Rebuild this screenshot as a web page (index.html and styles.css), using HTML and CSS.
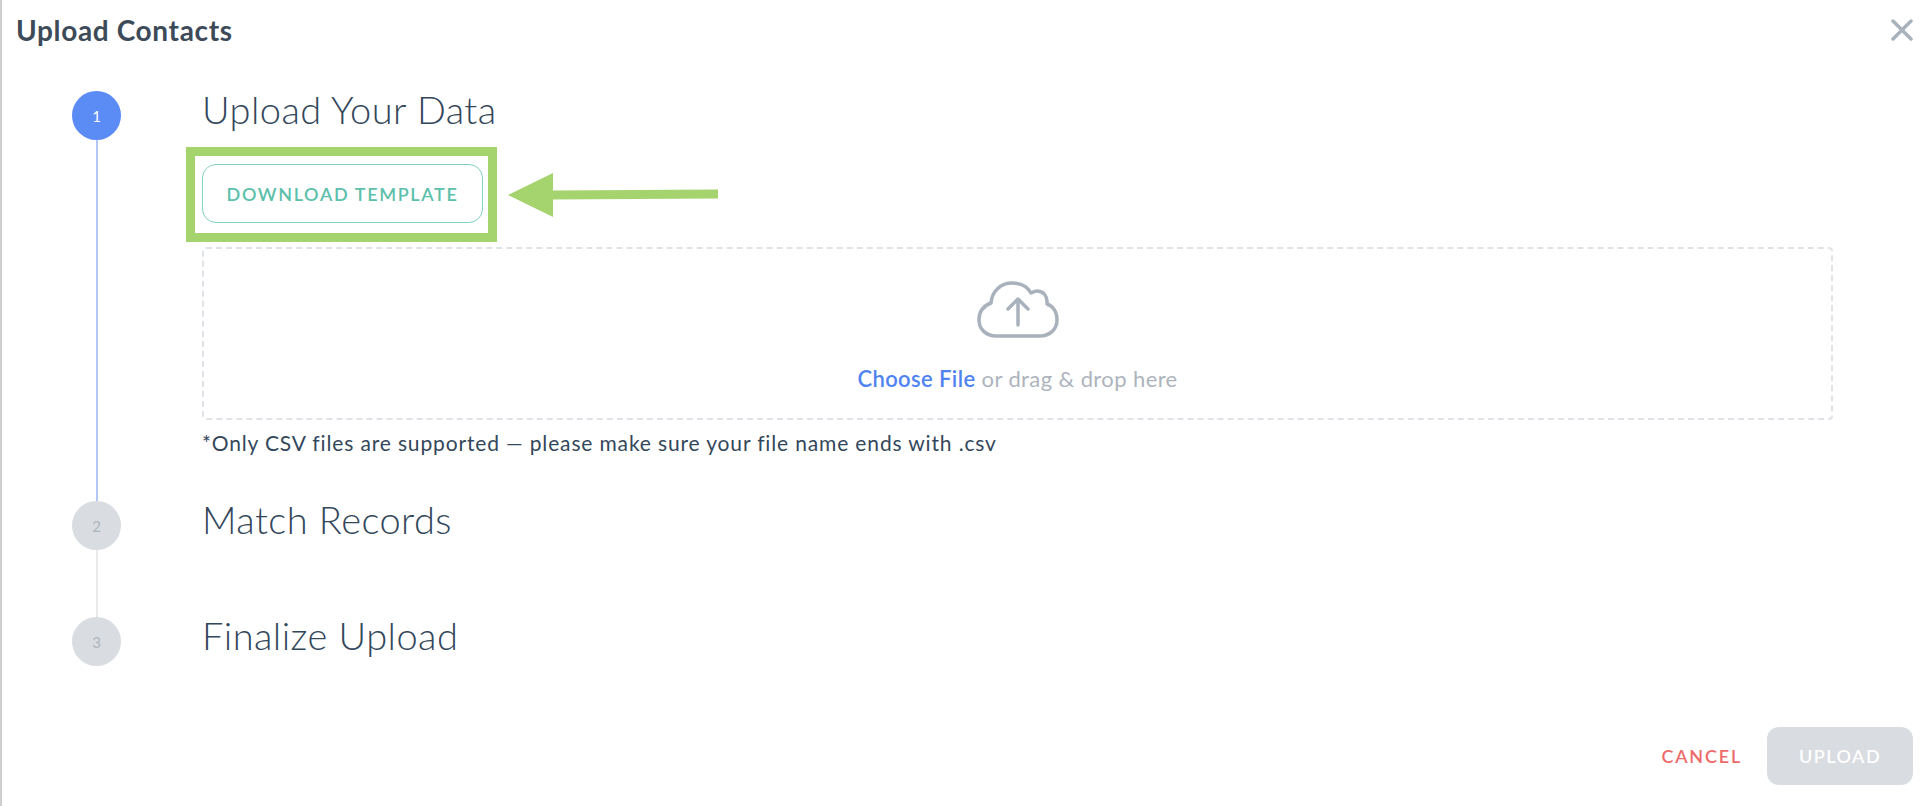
FILE: index.html
```html
<!DOCTYPE html>
<html lang="en">
<head>
    <meta charset="UTF-8">
    <title>Upload Contacts</title>
    <link rel="stylesheet" href="styles.css">
</head>
<body>
    <div class="modal">
        <div class="modal-header">
            <h1 class="modal-title">Upload Contacts</h1>
            <svg class="close-icon" width="22" height="22" viewBox="0 0 22 22">
                <path d="M2 2L20 20M20 2L2 20" fill="none" stroke="#a9b2bc" stroke-width="3.500" stroke-linecap="round"/>
            </svg>
        </div>

        <div class="steps">
            <div class="step step-active">
                <div class="rail">
                    <div class="circle">1</div>
                    <div class="line"></div>
                </div>
                <div class="step-body">
                    <h2 class="step-title">Upload Your Data</h2>
                    <div class="template-row">
                        <button class="btn-template">DOWNLOAD TEMPLATE</button>
                        <div class="callout-box"></div>
                        <svg class="callout-arrow" width="210" height="44" viewBox="0 0 210 44">
                            <path d="M0 22L45 0V17.500L210 16.500V25.500L45 26.500V44Z" fill="#a5d36e"/>
                        </svg>
                    </div>
                    <div class="dropzone">
                        <svg class="cloud-icon" width="84" height="60" viewBox="0 0 84 60">
                            <path d="M20 56H64C74 56 81 49 81 40C81 32 77 26 71 24C72 16 67 11 61 11C59 11 57 12 55 13C51 6 44 3 36 3C25 3 16 11 15 23C7 26 3 32 3 40C3 49 10 56 20 56Z" fill="none" stroke="#a9b2bc" stroke-width="3.500" stroke-linejoin="round"/>
                            <path d="M42 45V19M32 29L42 19L52 29" fill="none" stroke="#a9b2bc" stroke-width="3.500" stroke-linecap="round" stroke-linejoin="round"/>
                        </svg>
                        <p class="drop-text"><span class="choose-file">Choose File</span> or drag &amp; drop here</p>
                    </div>
                    <p class="hint">*Only CSV files are supported — please make sure your file name ends with .csv</p>
                </div>
            </div>

            <div class="step step-middle">
                <div class="rail">
                    <div class="circle">2</div>
                    <div class="line"></div>
                </div>
                <div class="step-body">
                    <h2 class="step-title">Match Records</h2>
                </div>
            </div>

            <div class="step step-last">
                <div class="rail">
                    <div class="circle">3</div>
                </div>
                <div class="step-body">
                    <h2 class="step-title">Finalize Upload</h2>
                </div>
            </div>
        </div>

        <div class="modal-footer">
            <button class="btn-cancel">CANCEL</button>
            <button class="btn-upload">UPLOAD</button>
        </div>
    </div>
</body>
</html>
```

FILE: styles.css
```css
* {
    box-sizing: border-box;
}

html,
body {
    margin: 0;
    height: 100%;
    background: #fff;
}

body {
    font-family: "Lato", "Liberation Sans", sans-serif;
    color: #33475b;
    overflow: hidden;
}

.modal {
    height: 806px;
    border-left: 2px solid #cfcfcf;
    display: flex;
    flex-direction: column;
}

.modal-header {
    flex-shrink: 0;
    height: 91px;
    padding: 0 15px 0 14px;
    display: flex;
    justify-content: space-between;
    align-items: flex-start;
}

.modal-title {
    margin: 14px 0 0;
    font-size: 28px;
    line-height: 32px;
    font-weight: 700;
    letter-spacing: 0.650px;
    color: #3d4b59;
}

.close-icon {
    margin-top: 19px;
}

.steps {
    flex: 1;
}

.step {
    display: flex;
    height: 116px;
}

.step-active {
    height: 410px;
}

.step-last {
    height: 49px;
}

.rail {
    width: 200px;
    padding-left: 70px;
    flex-shrink: 0;
}

.circle {
    width: 49px;
    height: 49px;
    border-radius: 50%;
    background: #d9dce1;
    color: #aeb5bd;
    font-size: 15px;
    display: flex;
    align-items: center;
    justify-content: center;
}

.line {
    width: 2px;
    height: calc(100% - 49px);
    margin-left: 24px;
    background: #e8e9eb;
}

.step-active .circle {
    background: #5b8cf5;
    color: #fff;
}

.step-active .line {
    background: #b3c7f8;
}

.step-body {
    flex: 1;
    padding-right: 95px;
}

.step-title {
    margin: -1px 0 0;
    font-size: 38px;
    line-height: 38px;
    font-weight: 300;
    letter-spacing: 0.450px;
    color: #33475b;
}

.template-row {
    position: relative;
    margin-top: 36px;
    height: 59px;
}

.btn-template {
    width: 281px;
    height: 59px;
    background: #fff;
    border: 1px solid #7fd0bf;
    border-radius: 14px;
    color: #5cc0ab;
    font-family: inherit;
    font-size: 18px;
    font-weight: 600;
    letter-spacing: 1.650px;
}

/* annotation drawn over the screenshot */
.callout-box {
    position: absolute;
    left: -16px;
    top: -17px;
    width: 311px;
    height: 95px;
    border: 9px solid #a5d36e;
}

.callout-arrow {
    position: absolute;
    left: 306px;
    top: 9px;
}

.dropzone {
    margin-top: 24px;
    height: 173px;
    border: 2px dashed #dfe3e8;
    border-radius: 4px;
    display: flex;
    flex-direction: column;
    align-items: center;
}

.cloud-icon {
    margin-top: 31px;
}

.drop-text {
    margin: 26px 0 0;
    font-size: 22px;
    line-height: 26px;
    letter-spacing: 0.400px;
    color: #adb4bd;
}

.choose-file {
    color: #4f83f1;
    font-weight: 600;
}

.hint {
    margin: 10px 0 0;
    font-size: 21px;
    line-height: 26px;
    letter-spacing: 0.850px;
    color: #33475b;
}

.modal-footer {
    flex-shrink: 0;
    height: 79px;
    padding: 0 15px 21px 0;
    display: flex;
    justify-content: flex-end;
    align-items: flex-end;
}

.btn-cancel {
    height: 58px;
    margin-right: 25px;
    padding: 0;
    background: none;
    border: none;
    color: #ee6b6b;
    font-family: inherit;
    font-size: 18px;
    font-weight: 600;
    letter-spacing: 1.800px;
}

.btn-upload {
    width: 146px;
    height: 58px;
    background: #d9dce1;
    border: none;
    border-radius: 12px;
    color: #fff;
    font-family: inherit;
    font-size: 18px;
    font-weight: 600;
    letter-spacing: 1.500px;
}
```
